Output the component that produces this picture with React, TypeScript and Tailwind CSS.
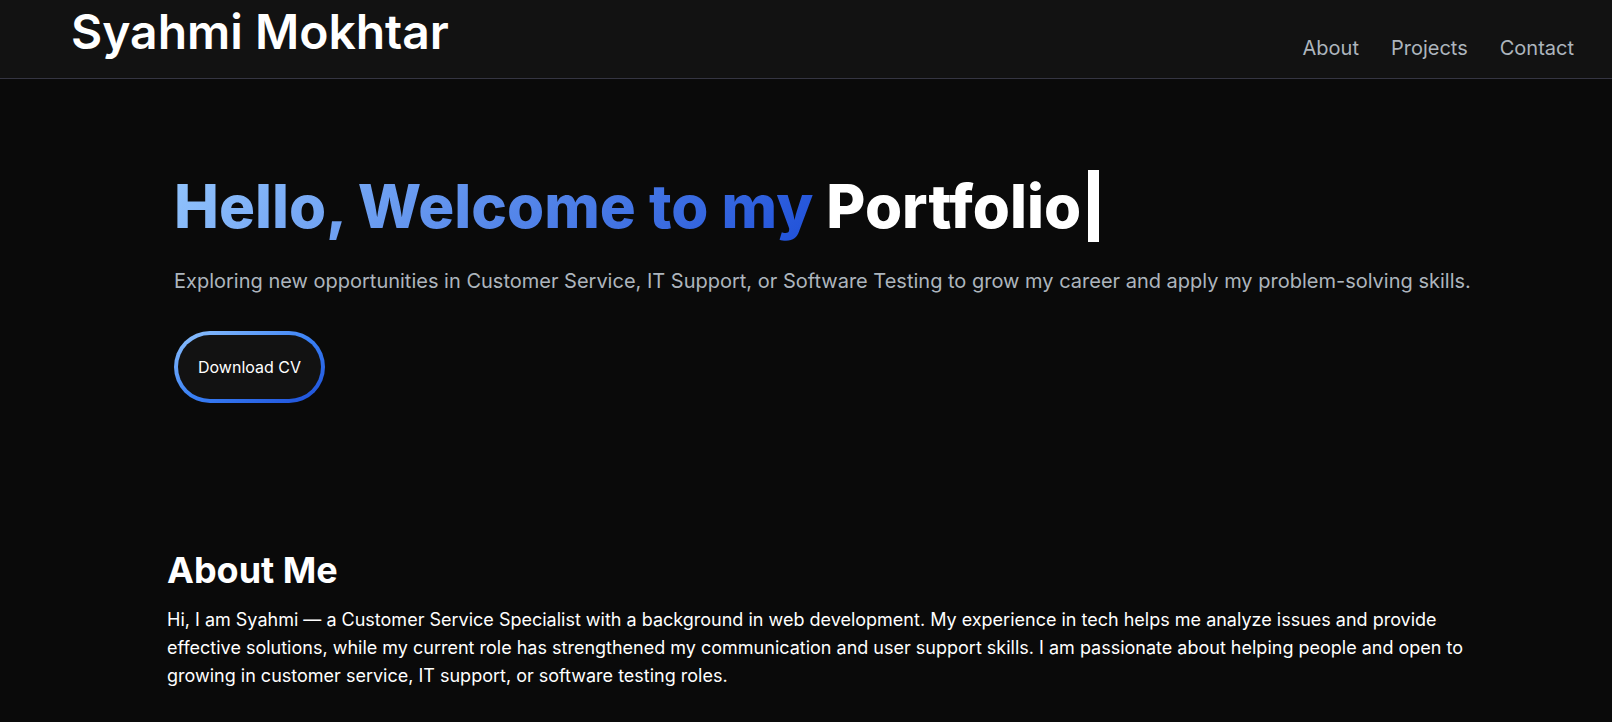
const links = ["About", "Projects", "Contact"];

export default function App() {
  return (
    <div className="min-h-screen bg-[#0a0a0a] font-['Inter',sans-serif] text-white">
      <header className="flex items-end justify-between border-b border-[#353542] bg-[#121212] pt-2 pr-[38px] pb-4 pl-[71px]">
        <a href="#home" className="pb-[6px] text-5xl font-semibold">Syahmi Mokhtar</a>
        <nav className="flex gap-8 text-xl text-[#adb5bd]">
          {links.map((label) => (
            <a key={label} href={`#${label.toLowerCase()}`}>{label}</a>
          ))}
        </nav>
      </header>
      <main>
        <section id="home" className="pt-[91px] pr-[110px] pl-[174px]">
          <h1 className="text-6xl leading-[72px] font-extrabold">
            <span className="bg-[linear-gradient(135deg,#93c5fd,#1d4ed8)] bg-clip-text text-transparent">Hello, Welcome to my </span>
            <span>Portfolio</span>
            <span className="ml-[7px] inline-block h-[72px] w-[11px] bg-white align-bottom" />
          </h1>
          <p className="mt-[25px] text-xl text-[#adb5bd]">
            Exploring new opportunities in Customer Service, IT Support, or Software Testing to grow my career and apply my problem-solving skills.
          </p>
          <button className="mt-9 rounded-full bg-linear-to-br/srgb from-[#93c5fd] via-[#3b82f6] to-[#1d4ed8] p-1">
            <span className="block rounded-full bg-[#121212] px-5 py-5 text-base">Download CV</span>
          </button>
        </section>
        <section id="about" className="pt-[147px] pr-[140px] pl-[167px]">
          <h2 className="text-4xl font-bold">About Me</h2>
          <p className="mt-4 text-lg leading-7">
            Hi, I am Syahmi — a Customer Service Specialist with a background in web development. My experience in tech helps me analyze issues and provide effective solutions, while my current role has strengthened my communication and user support skills. I am passionate about helping people and open to growing in customer service, IT support, or software testing roles.
          </p>
        </section>
      </main>
    </div>
  );
}
